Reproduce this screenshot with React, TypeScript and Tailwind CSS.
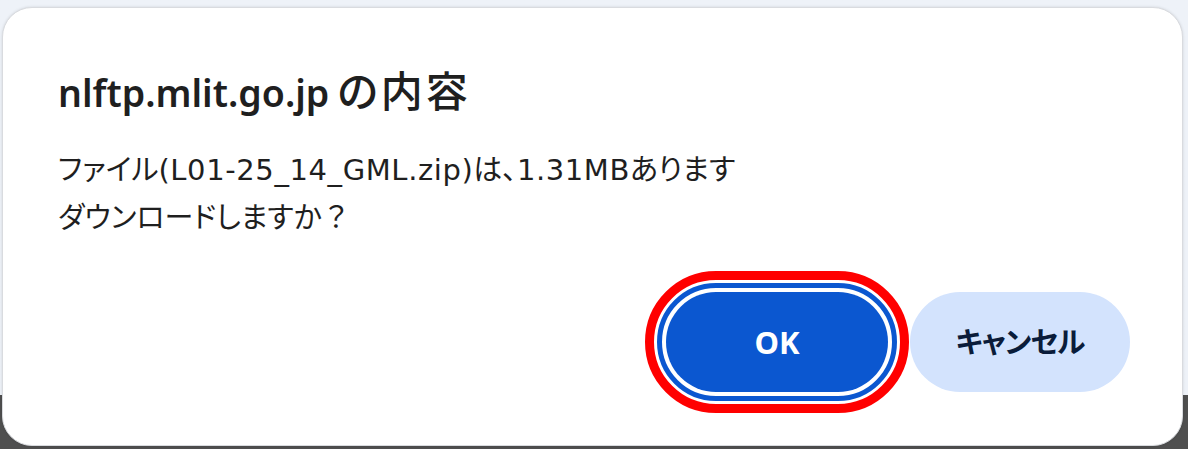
import React from "react";

const App: React.FC = () => {
    const font = { fontFamily: '"Noto Sans", "Noto Sans CJK JP", sans-serif' };

    return <div className="w-[1188px] h-[449px] overflow-hidden bg-linear-to-b from-[#eef2f8] from-88% to-[#4f4f4f] to-88% pl-[2px] pt-[7px]" style={font}>
                <div className="w-[1181px] h-[439px] bg-white rounded-[30px] border border-[#d9dbdf] shadow-[0_0_3px_rgba(0,0,0,0.12)] flex flex-col pl-[55px] pr-[52px] pt-[60px] [font-feature-settings:'palt']">
                    <h1 className="text-[37.5px] leading-[46px] font-semibold text-[#1f1f1f] flex items-baseline">
                        <span>nlftp.mlit.go.jp</span>
                        <span className="ml-[8px] text-[42px] tracking-[3px] font-medium">の内容</span>
                    </h1>
                    <div className="mt-[30px] text-[29px] leading-[48px] text-[#1f1f1f]" style={{ fontFamily: '"DejaVu Sans", "Noto Sans CJK JP", sans-serif' }}>
                        <p>ファイル<span className="tracking-[0.6px]">(L01-25_14_GML.zip)</span>は、<span className="tracking-[0.6px]">1.31MB</span>あります</p>
                        <p>ダウンロードしますか<span className="[font-feature-settings:normal]">？</span></p>
                    </div>
                    <div className="flex justify-end items-center gap-[1px] mt-auto mb-[32px]">
                        <div className="rounded-full border-[9px] border-[#ff0000] p-[3px] bg-white">
                            <div className="rounded-full border-[5px] border-[#0b57d0] p-[4px] bg-white">
                                <button type="button" className="w-[222px] h-[100px] rounded-full bg-[#0b57d0] text-white text-[31px] font-bold">
                                    OK
                                </button>
                            </div>
                        </div>
                        <button type="button" className="w-[220px] h-[100px] rounded-full bg-[#d3e3fd] text-[#0a1c3a] text-[29px] tracking-[-1px] font-bold">
                            キャンセル
                        </button>
                    </div>
                </div>
            </div>
}

export default App;
